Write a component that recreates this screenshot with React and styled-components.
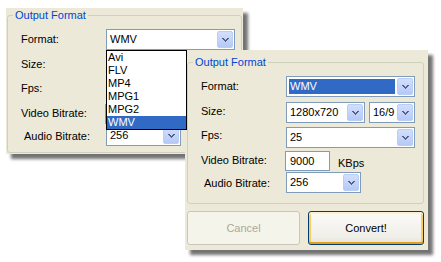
import React from 'react'
import styled, { createGlobalStyle } from 'styled-components'

const GlobalStyle = createGlobalStyle`
  html, body {
    margin: 0;
    padding: 0;
    background: #fff;
  }
  * {
    box-sizing: border-box;
  }
`

/* Styled */
const Canvas = styled.div`
  position: relative;
  width: 441px;
  height: 262px;
  overflow: hidden;
  background: #fff;
  font-family: 'Liberation Sans', Arial, sans-serif;
  font-size: 11px;
  color: #000;
`

const Window = styled.div`
  position: absolute;
  left: ${(p) => p.$x}px;
  top: ${(p) => p.$y}px;
  width: ${(p) => p.$w}px;
  height: ${(p) => p.$h}px;
  padding: ${(p) => p.$pad};
  background: #ece9d8;
  box-shadow: 5px 5px 3px rgba(0, 0, 0, 0.55);
  display: flex;
  flex-direction: column;
`

const GroupBox = styled.fieldset`
  margin: 0;
  min-width: 0;
  padding: 7px 0 ${(p) => p.$pb}px 13px;
  border: 1px solid #d0d0bf;
  border-radius: 3px;
  legend {
    margin-left: -8px;
    padding: 0 2px;
    height: 13px;
    line-height: 13px;
    color: #0046d5;
    font-size: 11px;
  }
`

const Row = styled.div`
  display: flex;
  align-items: flex-start;
  margin-top: ${(p) => p.$mt || 0}px;
`

const Label = styled.div`
  width: 85px;
  flex: none;
  padding-top: ${(p) => p.$pt}px;
  padding-left: ${(p) => p.$pl || 0}px;
  line-height: 13px;
  white-space: nowrap;
`

const Anchor = styled.div`
  position: relative;
`

const SelectBox = styled.div`
  display: flex;
  width: ${(p) => p.$w}px;
  height: 21px;
  margin-left: ${(p) => p.$ml || 0}px;
  padding: 1px;
  border: 1px solid #7f9db9;
  background: #fff;
`

const Value = styled.div`
  flex: 1;
  margin: 1px 2px 1px 1px;
  padding-left: 1px;
  line-height: 15px;
  white-space: nowrap;
  background: ${(p) => (p.$selected ? '#316ac5' : 'transparent')};
  color: ${(p) => (p.$selected ? '#fff' : '#000')};
`

const ArrowButton = styled.div`
  width: 16px;
  flex: none;
  display: flex;
  align-items: center;
  justify-content: center;
  border: 1px solid #bacdf7;
  border-radius: 2px;
  background: linear-gradient(#d2defc, #b6c9f6);
  svg {
    display: block;
    margin-top: 1px;
  }
`

const DropList = styled.ul`
  position: absolute;
  left: 0;
  top: 100%;
  width: 81px;
  margin: 0;
  padding: 0;
  list-style: none;
  border: 1px solid #000;
  background: #fff;
  z-index: 2;
`

const DropItem = styled.li`
  height: 13px;
  line-height: 13px;
  padding-left: 1px;
  background: ${(p) => (p.$active ? '#316ac5' : 'transparent')};
  color: ${(p) => (p.$active ? '#fff' : '#000')};
`

const TextBox = styled.div`
  width: 45px;
  height: 20px;
  margin-left: -1px;
  padding-left: 4px;
  border: 1px solid #7f9db9;
  background: #fff;
  line-height: 18px;
`

const Unit = styled.span`
  margin-left: 8px;
  padding-top: 6px;
  line-height: 13px;
`

const ButtonBar = styled.div`
  display: flex;
  gap: 8px;
  margin-top: 7px;
`

const Button = styled.div`
  width: ${(p) => p.$w}px;
  height: 34px;
  display: flex;
  align-items: center;
  justify-content: center;
  border-radius: 3px;
  ${(p) =>
    p.$disabled
      ? `
    border: 1px solid #c9c7ba;
    background: #f5f4ea;
    color: #aca899;
  `
      : `
    border: 1px solid #003c74;
    background: linear-gradient(#fbfbf8, #efeee8 80%, #e4e2d8);
    color: #000;
    box-shadow: inset 0 2px 0 #fff0cf, inset 0 -2px 0 #e5a01a, inset 2px 0 0 #f9cd62, inset -2px 0 0 #f9cd62;
  `}
`

/* Icons */
const Chevron = () => (
  <svg width='7' height='4' viewBox='0 0 7 4' shapeRendering='crispEdges' fill='#4d6185'>
    <rect x='0' y='0' width='2' height='1' />
    <rect x='5' y='0' width='2' height='1' />
    <rect x='1' y='1' width='2' height='1' />
    <rect x='4' y='1' width='2' height='1' />
    <rect x='2' y='2' width='3' height='1' />
    <rect x='3' y='3' width='1' height='1' />
  </svg>
)

const Select = ({ w, ml, value, selected }) => (
  <SelectBox $w={w} $ml={ml}>
    <Value $selected={selected}>{value}</Value>
    <ArrowButton>
      <Chevron />
    </ArrowButton>
  </SelectBox>
)

const formats = ['Avi', 'FLV', 'MP4', 'MPG1', 'MPG2', 'WMV']

// when the list is open, the controls under it are hidden, so their values are left out
const FormatGroup = ({ open, pb }) => (
  <GroupBox $pb={pb}>
    <legend>Output Format</legend>
    <Row>
      <Label $pt={4}>Format:</Label>
      <Anchor>
        <Select w={129} value='WMV' selected={!open} />
        {open && (
          <DropList>
            {formats.map((f) => (
              <DropItem key={f} $active={f === 'WMV'}>
                {f}
              </DropItem>
            ))}
          </DropList>
        )}
      </Anchor>
    </Row>
    <Row $mt={5}>
      <Label $pt={3}>Size:</Label>
      <Select w={79} value={open ? '' : '1280x720'} />
      <Select w={46} ml={4} value={open ? '' : '16/9'} />
    </Row>
    <Row $mt={4}>
      <Label $pt={2}>Fps:</Label>
      <Select w={129} value={open ? '' : '25'} />
    </Row>
    <Row $mt={3}>
      <Label $pt={3}>Video Bitrate:</Label>
      <TextBox>{open ? '' : '9000'}</TextBox>
      {!open && <Unit>KBps</Unit>}
    </Row>
    <Row $mt={1}>
      <Label $pt={5} $pl={3}>
        Audio Bitrate:
      </Label>
      <Select w={75} value='256' />
    </Row>
  </GroupBox>
)

const App = () => (
  <Canvas>
    <GlobalStyle />
    <Window $x={6} $y={8} $w={237} $h={146} $pad='1px 1px 0 1px'>
      <FormatGroup open pb={6} />
    </Window>
    <Window $x={185} $y={50} $w={243} $h={200} $pad='6px 4px 0 2px'>
      <FormatGroup pb={10} />
      <ButtonBar>
        <Button $w={113} $disabled>
          Cancel
        </Button>
        <Button $w={116}>Convert!</Button>
      </ButtonBar>
    </Window>
  </Canvas>
)

export default App
